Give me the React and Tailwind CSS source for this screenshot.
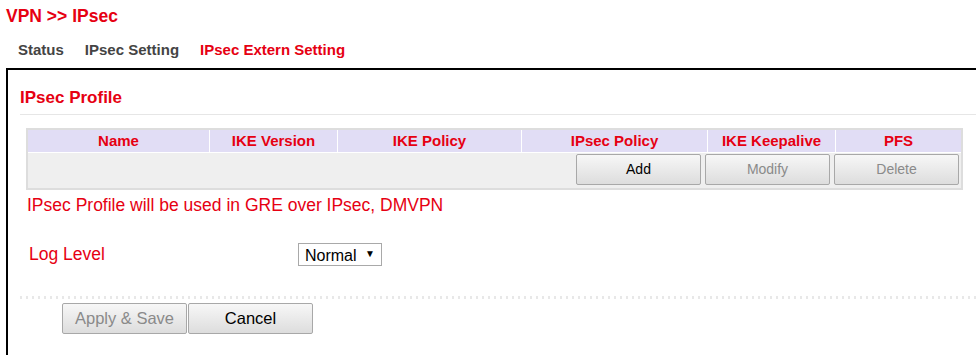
import React, { useState } from 'react';

const columns = [
  { label: 'Name', w: 'w-[181px]' },
  { label: 'IKE Version', w: 'w-[127px]' },
  { label: 'IKE Policy', w: 'w-[183px]' },
  { label: 'IPsec Policy', w: 'w-[185px]' },
  { label: 'IKE Keepalive', w: 'w-[127px]' },
  { label: 'PFS', w: 'w-[125px]' },
];

const Btn = ({ children, disabled, className = 'text-[14px]' }) => (
  <button
    type="button"
    disabled={disabled}
    className={`h-[31px] w-[125px] border border-[#a8a8a8] rounded-[2px] bg-gradient-to-b from-[#f7f7f7] to-[#dddddd] ${
      disabled ? 'text-[#8a8a8a]' : 'text-black'
    } ${className}`}
  >
    {children}
  </button>
);

const App = () => {
  const [level, setLevel] = useState('Normal');

  return (
    <div className="min-h-[355px] bg-white pt-[6px] font-['Liberation_Sans',Arial,sans-serif] overflow-hidden">
      <div className="pl-[6px] text-[17.5px] leading-[21px] font-bold text-[#e60012]">VPN &gt;&gt; IPsec</div>

      <div className="mt-[13px] flex gap-[21px] pl-[18px] text-[15px] leading-[20px] font-bold">
        <span className="text-[#444]">Status</span>
        <span className="text-[#444]">IPsec Setting</span>
        <span className="text-[#e60012]">IPsec Extern Setting</span>
      </div>

      <div className="mt-[8px] ml-[6px] h-[300px] border-l-2 border-t-2 border-black pl-[12px] pt-[18px]">
        <div className="text-[17px] leading-[20px] font-bold text-[#e60012]">IPsec Profile</div>
        <div className="mt-[6px] h-px bg-[#e6e6e6]" />

        <div className="mt-[13px] ml-[6px] w-[937px] border-2 border-[#dddddd]">
          <div className="flex gap-x-px bg-white">
            {columns.map((c) => (
              <div
                key={c.label}
                className={`${c.w} h-[22px] bg-[#e1ddf5] text-center text-[15px] leading-[22px] font-bold text-[#e60012]`}
              >
                {c.label}
              </div>
            ))}
          </div>
          <div className="mt-px flex h-[35px] justify-end gap-[4px] bg-[#efefef] pr-[2px] pt-[1px]">
            <Btn>Add</Btn>
            <Btn disabled>Modify</Btn>
            <Btn disabled>Delete</Btn>
          </div>
        </div>

        <div className="mt-[4px] ml-[7px] text-[17.5px] leading-[22px] text-[#e60012]">
          IPsec Profile will be used in GRE over IPsec, DMVPN
        </div>

        <div className="mt-[26px] ml-[9px] flex h-[24px] items-center">
          <span className="w-[269px] text-[17.5px] text-[#e60012]">Log Level</span>
          <div className="relative h-[23px] w-[84px] border border-[#a9a9a9] bg-white">
            <select
              value={level}
              onChange={(e) => setLevel(e.target.value)}
              className="h-full w-full appearance-none bg-transparent pl-[6px] pb-[2px] text-[16px] leading-[19px] text-black outline-none"
            >
              <option>Normal</option>
              <option>Debug</option>
              <option>Error</option>
            </select>
            <span className="pointer-events-none absolute right-[6px] top-[3px] text-[10px] leading-[14px] text-black">▼</span>
          </div>
        </div>

        <div className="mt-[30px] h-[3px] bg-[repeating-linear-gradient(to_right,#e8e8e8_0_2px,transparent_2px_6px)]" />

        <div className="mt-[4px] ml-[42px] flex gap-px">
          <Btn disabled className="text-[16.5px]">Apply &amp; Save</Btn>
          <Btn className="text-[16.5px]">Cancel</Btn>
        </div>
      </div>
    </div>
  );
};

export default App;
